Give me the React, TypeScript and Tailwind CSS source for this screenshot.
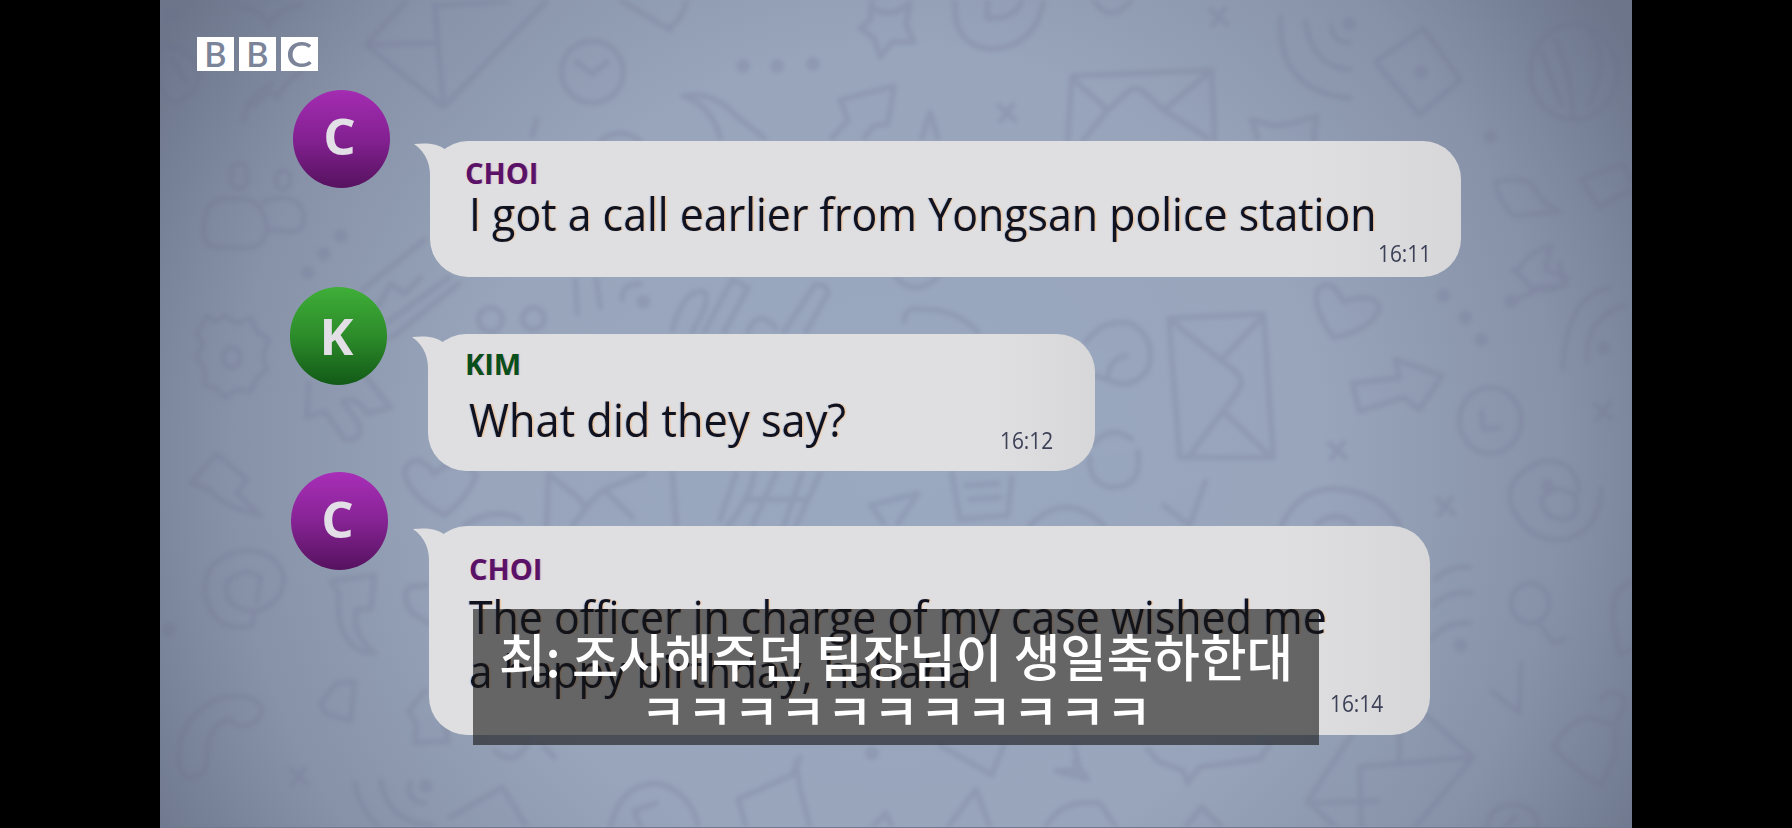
type Message = {
  initial: string
  name: string
  lines: { text: string; stretch: string }[]
  time: string
  row: string
  avatar: string
  nameColor: string
  bubble: string
  textClass: string
  timeClass: string
}

const messages: Message[] = [
  {
    initial: 'C',
    name: 'CHOI',
    lines: [{ text: 'I got a call earlier from Yongsan police station', stretch: 'scale-x-[0.953]' }],
    time: '16:11',
    row: 'h-[197px] pl-[133px]',
    avatar: 'from-[#a42cb2] via-[#842192] to-[#56125f] pb-[7px]',
    nameColor: 'text-[#5a1268]',
    bubble: 'ml-[40px] mt-[51px] h-[136px] w-[1031px] pl-[35px] pt-[18px]',
    textClass: 'pl-[4px]',
    timeClass: 'mr-[30px] mb-[12px]',
  },
  {
    initial: 'K',
    name: 'KIM',
    lines: [{ text: 'What did they say?', stretch: 'scale-x-[0.963]' }],
    time: '16:12',
    row: 'h-[185px] pl-[130px]',
    avatar: 'from-[#3fae38] via-[#2c8c2a] to-[#125a17] pb-[2px]',
    nameColor: 'text-[#07501b]',
    bubble: 'ml-[41px] mt-[47px] h-[137px] w-[667px] pl-[37px] pt-[16px]',
    textClass: 'mt-[15px] pl-[4px]',
    timeClass: 'mr-[42px] mb-[19px]',
  },
  {
    initial: 'C',
    name: 'CHOI',
    lines: [
      { text: 'The officer in charge of my case wished me', stretch: 'scale-x-[0.952]' },
      { text: 'a happy birthday, hahaha', stretch: 'scale-x-[0.938]' },
    ],
    time: '16:14',
    row: 'h-[270px] pl-[131px]',
    avatar: 'from-[#a92eb8] via-[#862394] to-[#56125f] pb-[5px]',
    nameColor: 'text-[#5a1268]',
    bubble: 'ml-[41px] mt-[54px] h-[209px] w-[1001px] pl-[40px] pt-[29px]',
    textClass: 'mt-[7px]',
    timeClass: 'mr-[47px] mb-[20px]',
  },
]

// Chat wallpaper: outlined doodles, in the coordinates of the whole window
const outlines = [
  // paper plane / envelope, top left
  'M405 2 L365 45 L443 107 L545 2 M365 45 L434 43 M434 4 L443 107 M434 6 L508 1',
  'M620 0 L670 30 M668 28 Q682 20 686 2',
  'M240 7 Q262 10 268 26 Q276 8 300 5',
  'M160 47 Q184 44 197 68 Q200 92 176 102 Q160 98 160 84 M172 60 L186 84',
  'M243 120 Q246 94 272 84 M253 106 Q270 84 277 98 Q282 84 300 72',
  // people
  'M203 232 Q202 202 222 199 L246 199 Q266 206 266 232 Q262 250 240 248 L212 247 Q203 244 203 232',
  'M262 202 Q296 190 303 214 Q306 232 288 232 L268 230',
  'M232 176 a8 8 0 1 0 13 0 a8 8 0 1 0 -13 0 M276 180 a7 7 0 1 0 13 0 a7 7 0 1 0 -13 0',
  // clock
  'M561 72 a31 31 0 1 0 62 0 a31 31 0 1 0 -62 0 M576 62 L592 74 L607 62',
  'M532 136 L536 120 M600 141 Q620 126 640 141',
  // star and coin
  'M872 0 L870 20 L860 28 L874 38 L880 57 L892 42 L914 42 L906 24 L910 4 M872 8 Q894 20 910 2',
  'M955 0 Q952 48 994 49 Q1036 46 1044 0 M988 0 L987 18 Q1016 20 1022 0 M1094 0 Q1110 26 1132 0',
  // moon and arrow
  'M683 96 Q712 90 736 116 L764 138 M683 96 Q712 106 720 138',
  'M832 138 L848 120 L840 100 L894 86 L888 124 L874 126 L864 138 M922 138 L930 112 L938 138',
  // envelope behind the first bubble
  'M1068 140 L1072 76 L1212 70 L1215 140 M1072 78 L1108 110 L1130 90 Q1138 86 1146 94 L1164 110 L1210 72 M1084 140 L1108 110 M1164 110 L1208 138',
  // wifi
  'M1281 18 Q1278 92 1350 98 M1306 22 Q1312 66 1350 70 M1332 26 Q1334 44 1350 42',
  'M1376 62 L1424 28 L1461 80 L1420 115 Z',
  'M1252 120 L1276 126 L1290 124 L1317 116 L1314 140 M1258 138 L1252 120',
  // globe
  'M1531 72 a43 47 0 1 0 87 0 a43 47 0 1 0 -87 0 M1556 40 Q1572 74 1574 116 M1590 30 Q1612 60 1590 104 M1542 52 L1562 104',
  'M1496 182 Q1510 178 1530 182 L1544 202 L1560 212 L1514 216 Q1498 200 1496 182',
  'M1582 180 L1624 164 L1632 182 M1582 180 L1600 208 L1612 200 L1632 190',
  'M1518 272 Q1528 252 1552 246 L1546 270 L1568 278 Q1558 294 1540 290 L1512 302',
  // pencils
  'M362 290 L424 240 M378 306 L390 284 L404 294 L420 278 M362 330 Q378 344 394 336 L458 284 M388 322 L448 278',
  'M478 320 a12 12 0 1 0 24 0 a12 12 0 1 0 -24 0 M522 319 a11 11 0 1 0 22 0 a11 11 0 1 0 -22 0',
  'M575 281 L577 314 M596 280 L600 308 M622 300 Q620 284 640 284',
  'M672 330 Q684 288 704 292 Q712 300 692 332 M704 332 L732 280 L748 288 L724 332 M748 332 Q756 308 776 328 M784 332 L814 286 Q826 282 828 294 L806 332',
  'M896 278 Q914 298 938 278 M904 322 Q904 306 922 310 Q954 308 978 332',
  // gear
  'M206 316 L214 322 L224 316 L236 324 L250 318 L256 332 L268 340 L262 356 L266 370 L256 378 L250 392 L236 390 L224 398 L214 388 L204 386 L204 370 L196 358 L202 344 L196 334 Z',
  'M222 358 a9 10 0 1 0 18 0 a9 10 0 1 0 -18 0',
  'M308 384 L306 418 L324 412 L344 440 Q364 442 358 424 L342 402 Q356 396 366 414 L390 408 L366 378',
  'M216 454 L190 484 L208 490 Q226 510 260 516 L236 494 L246 480 Z',
  // hearts
  'M444 516 Q404 494 404 470 Q416 450 434 474 Q456 454 476 476 Q466 500 444 516',
  'M1334 338 Q1312 308 1318 290 Q1332 276 1344 302 Q1376 292 1380 308 Q1374 330 1334 338',
  'M464 526 Q494 506 520 520',
  'M546 526 L548 474 L580 500 L584 508 L604 490 L632 518 M604 490 L644 474 M572 526 L588 506 M672 474 L676 526',
  'M720 520 L736 474 M728 526 Q750 500 754 474 M752 526 L776 474 M796 526 L820 474 M744 500 L804 500 M784 526 L802 474',
  'M870 506 L918 494 L898 524 M872 508 L884 524 M952 474 L960 520 L1008 516 L1012 478 M966 486 L998 484 M970 500 L1000 498',
  // swirls right of the second bubble
  'M1086 342 Q1104 318 1132 324 Q1158 340 1148 370 Q1132 392 1108 380 Q1108 360 1126 356 M1096 376 L1118 384',
  'M1094 444 Q1112 424 1132 440 M1138 452 Q1144 488 1112 488 Q1088 484 1090 458',
  'M1030 526 Q1066 490 1104 526',
  // tall envelope
  'M1169 319 L1264 314 L1274 458 L1180 458 Z M1170 320 L1236 372 Q1246 382 1238 392 L1190 456 M1262 318 L1224 358 M1224 412 L1270 456',
  // arrow
  'M1353 384 L1400 378 L1396 360 L1443 376 L1420 410 L1404 398 L1360 412 Z',
  'M1460 421 a31 33 0 1 0 62 0 a31 33 0 1 0 -62 0 M1482 412 L1484 430 L1500 428',
  'M1564 368 Q1566 298 1610 288 M1588 362 Q1586 318 1624 306 M1514 270 L1532 288 L1566 286 L1560 264',
  'M1580 492 Q1576 458 1542 462 Q1504 478 1512 506 Q1528 544 1566 540 Q1600 532 1602 490 M1566 520 Q1544 520 1542 500 Q1554 482 1576 496 Q1582 516 1566 520',
  'M1164 506 L1190 526 L1206 482 M1282 526 Q1302 484 1344 490 Q1384 496 1400 526 M1318 524 Q1336 510 1354 524',
  // at sign
  'M254 612 Q286 604 282 574 Q272 548 238 552 Q202 560 204 594 Q212 636 252 626 L254 612 Q222 610 226 584 Q240 566 260 578 L256 602',
  'M330 582 L374 576 L370 610 L356 610 Q350 634 374 654 M330 582 L338 594 Q334 644 366 654',
  'M408 588 Q400 600 412 614 L428 624 M408 588 L426 586',
  // phone handset
  'M178 756 Q180 714 222 698 Q258 694 262 712 Q254 730 236 726 L228 720 Q206 728 206 756 Q208 778 188 778 Q176 774 178 756',
  'M354 682 L336 684 L320 704 L324 714 L350 722 Z',
  'M408 712 L424 692 M408 712 L416 726 L414 744 L448 742 L444 724',
  'M354 784 Q360 812 378 828 M380 782 Q388 824 430 826 M410 784 Q404 802 424 804',
  'M450 818 L502 788 L526 828 M494 752 Q514 768 526 746 M544 748 L554 758 M610 828 Q620 784 658 784 Q692 794 698 828 M640 828 L634 812 L656 804',
  'M738 800 L792 776 L800 758 M738 800 L746 828 M796 762 L800 790 L810 828 M948 828 L976 790 L990 828 M872 828 L886 814 L892 828',
  'M940 746 L992 776 L1004 746 M1074 746 L1080 770 L1056 772 L1088 780 L1074 762 M1046 828 Q1060 800 1100 804 L1116 828',
  'M1148 750 L1158 762 L1184 772 L1188 784 L1200 768 L1260 760 L1270 746 M1186 828 L1202 808 L1222 828',
  // envelope, bottom right
  'M1352 736 L1308 802 L1336 828 M1424 714 L1474 758 L1416 828 M1308 804 L1378 802 M1362 828 L1360 768 L1474 758 M1400 736 L1400 766',
  'M1436 580 Q1450 566 1470 568 M1434 606 Q1450 590 1472 594 M1432 640 Q1446 622 1470 624',
  'M1512 604 a19 20 0 1 0 38 0 a19 20 0 1 0 -38 0 M1540 624 L1554 644 L1566 640 M1492 692 L1520 714 L1522 664',
  'M1632 582 Q1612 590 1614 620 L1620 656 L1632 650 M1554 748 Q1568 722 1590 718 L1616 726 L1616 756 L1602 786 Q1580 776 1554 748 M1602 700 Q1610 686 1626 700 Q1624 716 1614 726',
  'M1488 828 Q1490 804 1520 806 Q1540 812 1538 828 M1506 828 L1516 818',
]

const dots = [
  [168, 16], [743, 66], [777, 66], [813, 64], [1350, 24], [1422, 72], [1491, 137], [340, 236],
  [323, 254], [307, 273], [643, 302], [1444, 296], [1466, 318], [1482, 340], [1604, 348],
  [1461, 646], [872, 754], [425, 787], [168, 630], [1512, 302], [1548, 486],
]

const crosses = [
  [1219, 17], [1007, 113], [1338, 451], [1446, 507], [1604, 412], [298, 777],
]

const Wallpaper = () => (
  <svg
    className="absolute inset-0 h-full w-full blur-[2px]"
    viewBox="160 0 1472 828"
    fill="none"
    stroke="#6b6c8c"
    strokeWidth="5.5"
    strokeLinecap="round"
    strokeLinejoin="round"
    opacity="0.2"
  >
    {outlines.map((d) => (
      <path key={d} d={d} fill="#8585b5" fillOpacity="0.15" />
    ))}
    {dots.map(([x, y]) => (
      <circle key={`${x}-${y}`} cx={x} cy={y} r="7" fill="#6b6c8c" stroke="none" />
    ))}
    {crosses.map(([x, y]) => (
      <path key={`${x}-${y}`} d={`M${x - 8} ${y - 7} L${x + 8} ${y + 7} M${x + 6} ${y - 8} L${x - 6} ${y + 8}`} />
    ))}
  </svg>
)

const Logo = () => (
  <div className="flex h-[90px] gap-[5.5px] pl-[37px] pt-[37px] font-['Lato',sans-serif] text-[34px] font-semibold leading-[34px] text-[#7b8499]">
    {['B', 'B', 'C'].map((letter, i) => (
      <span key={i} className="flex h-[34px] w-[36.5px] items-center justify-center bg-white">
        <span className={letter === 'C' ? 'scale-x-115' : ''}>{letter}</span>
      </span>
    ))}
  </div>
)

const Bubble = ({ message }: { message: Message }) => (
  <div
    className={`relative grid shrink-0 rounded-[38px] bg-linear-to-r from-[#dfdfe1] from-85% to-[#d7d7d9] ${message.bubble}`}
  >
    <svg className="absolute -left-4 top-0 h-10 w-14" viewBox="-16 0 56 40">
      <path d="M-16 3 C-4 2 7 2 16 9 L40 20 L0 40 C1 25 -3 12 -16 3 Z" fill="#dfdfe1" />
    </svg>
    <div className="relative [grid-area:1/1]">
      <div
        className={`text-[29px] font-bold leading-[28px] [text-shadow:1px_0_1px_rgba(230,80,120,0.35)] ${message.nameColor}`}
      >
        {message.name}
      </div>
      <div
        className={`whitespace-nowrap text-[45px] leading-[54px] text-[#10131f] [text-shadow:1.5px_0_1px_rgba(255,170,90,0.45),-1px_0_1px_rgba(80,130,220,0.3)] ${message.textClass}`}
      >
        {message.lines.map(({ text, stretch }) => (
          <div key={text}>
            <span className={`inline-block origin-left ${stretch}`}>{text}</span>
          </div>
        ))}
      </div>
    </div>
    <time
      className={`origin-right scale-x-[0.87] self-end justify-self-end text-[24px] leading-[24px] text-[#3d4157] [grid-area:1/1] ${message.timeClass}`}
    >
      {message.time}
    </time>
  </div>
)

const App = () => {
  return (
    <div className="flex h-[828px] w-[1792px] justify-center overflow-hidden bg-black font-['Open_Sans','Noto_Sans_CJK_KR',sans-serif]">
      <main className="relative h-[828px] w-[1472px] overflow-hidden border-b border-[#6f7a90] bg-[radial-gradient(ellipse_58%_100%_at_50%_56%,#9aa8c0_0%,#98a5bb_50%,#8792a8_78%,#6c758a_100%)]">
        <Wallpaper />
        <div className="relative">
          <Logo />
          {messages.map((message) => (
            <div key={message.time} className={`flex items-start ${message.row}`}>
              <div
                className={`flex h-[98px] w-[97px] shrink-0 items-center justify-center rounded-full bg-linear-to-b pr-[4px] text-[51px] font-bold leading-none text-[#e2dfe6] ${message.avatar}`}
              >
                {message.initial}
              </div>
              <Bubble message={message} />
            </div>
          ))}
        </div>
        {/* subtitle over the conversation */}
        <div className="absolute left-[313px] top-[609px] h-[136px] w-[846px] whitespace-nowrap bg-[#141414]/60 pt-[19px] text-center font-['Noto_Sans_CJK_KR',sans-serif] text-[50.6px] font-medium leading-[54px] text-white">
          <p>최: 조사해주던 팀장님이 생일축하한대</p>
          <p>ㅋㅋㅋㅋㅋㅋㅋㅋㅋㅋㅋ</p>
        </div>
      </main>
    </div>
  )
}

export default App
